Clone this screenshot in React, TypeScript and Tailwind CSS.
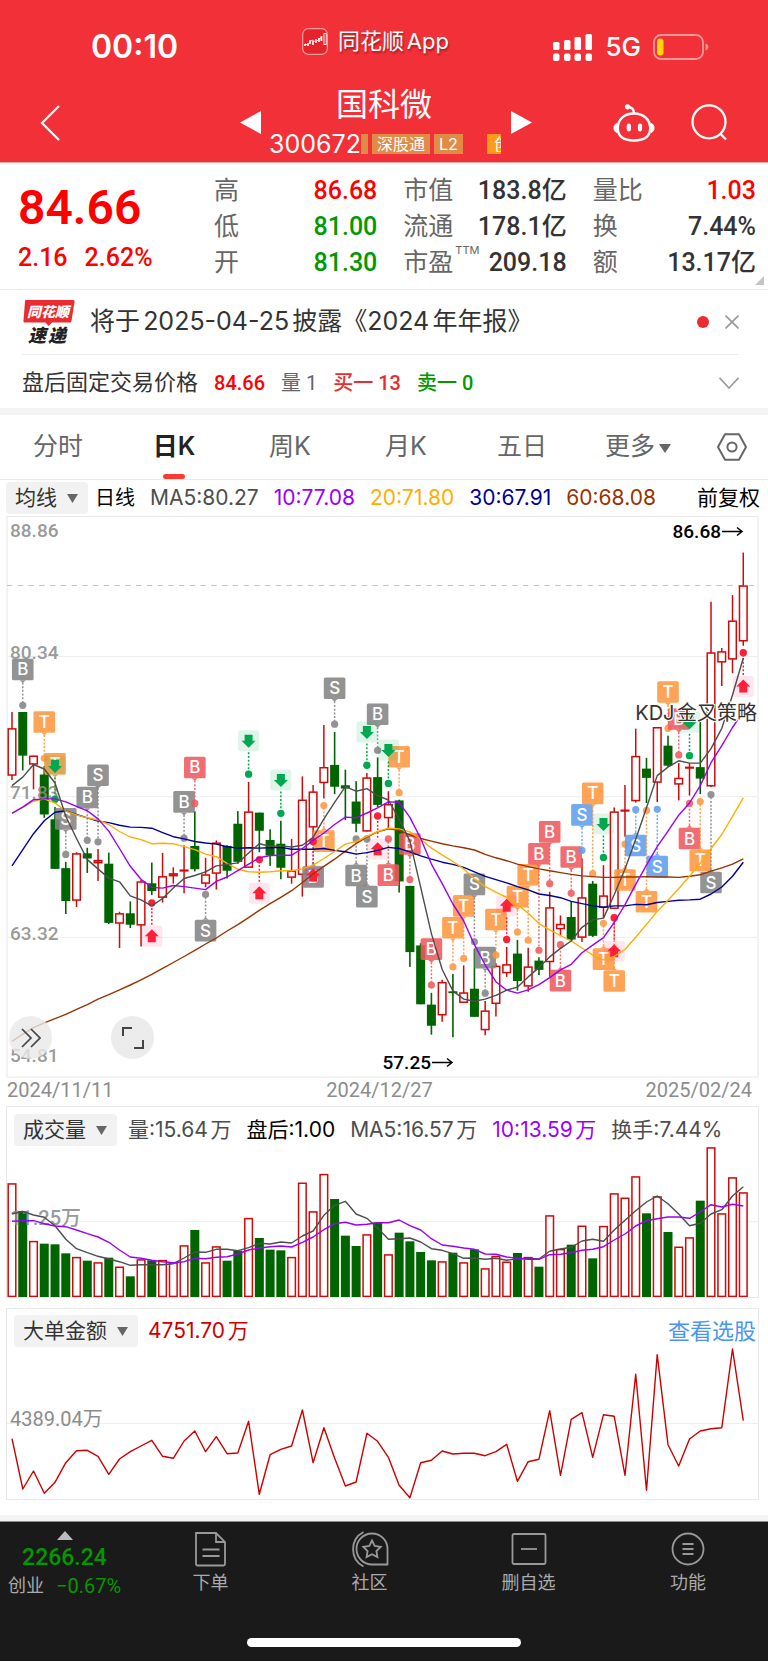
import { useState } from "react";
import type { ReactNode } from "react";

// Horizontal grid shared by the three charts
const X0 = 12;
const STEP = 10.754;
const x = (i: number) => X0 + i * STEP;

const UP = "#cf0a0a";
const DOWN = "#006400";

type Dir = "R" | "G";

// [direction, body top, body bottom, high, low]
const candles: [Dir, number, number, number, number][] = [
  ["R", 590, 718, 546, 730], ["G", 546, 664, 546, 704], ["R", 664, 688, 664, 755], ["G", 715, 823, 692, 832],
  ["G", 836, 970, 803, 970], ["G", 968, 1057, 951, 1092], ["R", 928, 1056, 925, 1073], ["G", 928, 942, 913, 981],
  ["R", 946, 955, 916, 1003], ["G", 956, 1116, 926, 1119], ["R", 1090, 1118, 1086, 1184], ["G", 1090, 1121, 1058, 1130],
  ["R", 1004, 1123, 1000, 1180], ["G", 1009, 1030, 953, 1041], ["R", 990, 1048, 927, 1061], ["R", 982, 990, 966, 1010],
  ["R", 972, 977, 906, 1036], ["G", 908, 971, 814, 977], ["R", 985, 1010, 940, 1020], ["R", 899, 983, 893, 1026],
  ["G", 908, 975, 906, 996], ["G", 848, 951, 814, 956], ["R", 815, 967, 735, 967], ["G", 818, 867, 818, 925],
  ["G", 892, 933, 863, 962], ["G", 902, 967, 840, 998], ["R", 975, 994, 889, 1010], ["R", 783, 986, 720, 1045],
  ["R", 761, 858, 743, 890], ["R", 695, 738, 581, 780], ["G", 689, 748, 600, 768], ["G", 744, 753, 702, 838],
  ["G", 788, 848, 733, 871], ["R", 723, 869, 711, 869], ["G", 722, 797, 669, 803], ["R", 795, 833, 760, 860],
  ["G", 785, 1004, 783, 1034], ["G", 1016, 1195, 1016, 1235], ["G", 1177, 1336, 1171, 1336], ["G", 1337, 1394, 1305, 1418],
  ["R", 1276, 1366, 1270, 1383], ["G", 1301, 1306, 1254, 1425], ["R", 1304, 1332, 1231, 1332], ["G", 1294, 1370, 1186, 1370],
  ["R", 1353, 1406, 1327, 1420], ["R", 1232, 1335, 1225, 1369], ["R", 1228, 1252, 1181, 1262], ["G", 1199, 1273, 1162, 1299],
  ["R", 1234, 1288, 1183, 1302], ["G", 1218, 1243, 1209, 1257], ["R", 1074, 1222, 1032, 1262], ["R", 1119, 1133, 1096, 1152],
  ["G", 1100, 1161, 1058, 1165], ["R", 1047, 1156, 941, 1168], ["G", 1010, 1151, 1003, 1154], ["R", 1042, 1075, 960, 1103],
  ["R", 815, 1078, 804, 1078], ["R", 810, 815, 743, 883], ["R", 665, 787, 591, 791], ["G", 699, 724, 670, 792],
  ["R", 587, 737, 587, 789], ["G", 637, 691, 610, 694], ["R", 724, 742, 684, 785], ["R", 694, 699, 684, 772],
  ["G", 695, 726, 573, 768], ["R", 385, 747, 248, 749], ["R", 382, 412, 373, 476], ["R", 299, 404, 230, 441],
  ["R", 204, 355, 115, 367],
];

const ma5 = [745, 722, 688, 700, 738, 828, 888, 945, 970, 995, 1005, 1043, 1054, 1070, 1050, 1022, 996, 988, 978, 962, 958, 954, 927, 902, 909, 908, 911, 906, 885, 835, 790, 748, 760, 753, 772, 784, 835, 895, 1020, 1145, 1242, 1300, 1322, 1328, 1322, 1312, 1298, 1290, 1262, 1237, 1208, 1185, 1165, 1128, 1108, 1103, 1040, 970, 890, 805, 718, 695, 678, 684, 684, 645, 590, 500, 400];
const ma10 = [820, 803, 783, 781, 781, 789, 801, 813, 835, 868, 915, 963, 998, 1020, 1022, 1015, 1018, 1022, 1026, 1004, 992, 975, 957, 940, 934, 933, 933, 915, 893, 873, 850, 830, 832, 819, 805, 789, 790, 831, 888, 957, 1010, 1065, 1111, 1175, 1230, 1275, 1298, 1306, 1297, 1283, 1264, 1243, 1228, 1197, 1176, 1156, 1115, 1067, 1012, 960, 910, 868, 825, 792, 745, 683, 637, 588, 545];
const ma20 = [819, 803, 787, 781, 792, 814, 824, 832, 838, 850, 869, 884, 891, 902, 901, 902, 910, 918, 930, 937, 955, 971, 978, 979, 978, 975, 975, 970, 960, 942, 923, 903, 896, 882, 869, 860, 862, 870, 890, 914, 932, 950, 970, 997, 1018, 1033, 1047, 1066, 1090, 1118, 1135, 1150, 1165, 1184, 1203, 1216, 1207, 1188, 1155, 1120, 1085, 1055, 1024, 990, 955, 915, 877, 828, 778];
const ma30 = [962, 918, 875, 840, 817, 813, 823, 832, 841, 845, 852, 857, 858, 860, 872, 883, 889, 896, 900, 903, 910, 914, 913, 914, 913, 912, 917, 917, 917, 915, 920, 924, 930, 926, 920, 912, 915, 924, 935, 944, 952, 958, 966, 978, 990, 999, 1008, 1018, 1027, 1038, 1042, 1048, 1058, 1064, 1070, 1074, 1070, 1070, 1066, 1067, 1061, 1058, 1055, 1054, 1052, 1038, 1019, 990, 952];
const ma60 = [1436, 1417, 1399, 1386, 1375, 1363, 1350, 1337, 1322, 1310, 1297, 1284, 1270, 1255, 1239, 1223, 1207, 1190, 1173, 1157, 1138, 1121, 1102, 1082, 1064, 1047, 1029, 1007, 984, 963, 944, 922, 902, 884, 870, 862, 866, 878, 888, 895, 902, 908, 913, 919, 931, 940, 948, 957, 964, 970, 975, 980, 985, 989, 991, 993, 993, 992, 992, 991, 992, 992, 993, 990, 986, 976, 967, 957, 943];

const volumes = [310, 393, 483, 491, 493, 520, 531, 542, 547, 533, 560, 589, 538, 541, 540, 547, 496, 450, 547, 499, 542, 512, 414, 474, 509, 511, 531, 308, 394, 282, 357, 467, 498, 463, 427, 523, 458, 484, 516, 541, 544, 518, 547, 508, 565, 528, 545, 519, 531, 560, 406, 507, 494, 437, 535, 438, 340, 353, 289, 400, 349, 456, 500, 472, 362, 202, 400, 292, 337];
const vol5 = [402, 394, 405, 412, 437, 478, 506, 518, 529, 537, 545, 556, 554, 554, 554, 551, 534, 516, 517, 508, 508, 512, 503, 490, 492, 486, 489, 468, 453, 406, 376, 364, 402, 415, 444, 478, 476, 474, 486, 506, 511, 521, 535, 534, 538, 535, 541, 536, 535, 537, 514, 507, 502, 483, 478, 484, 450, 421, 392, 366, 348, 371, 402, 437, 430, 402, 389, 348, 320];
const vol10 = [424, 422, 422, 431, 438, 440, 450, 461, 471, 487, 510, 531, 535, 541, 545, 548, 545, 535, 536, 532, 530, 522, 510, 504, 500, 498, 501, 487, 471, 449, 431, 427, 435, 433, 428, 428, 420, 437, 450, 476, 495, 499, 504, 508, 522, 523, 531, 535, 538, 538, 524, 523, 518, 511, 508, 500, 480, 462, 438, 422, 416, 411, 411, 415, 396, 374, 381, 373, 378];

const bigOrders = [416, 567, 513, 580, 547, 488, 452, 451, 469, 523, 477, 455, 438, 421, 469, 475, 423, 393, 455, 410, 461, 459, 364, 583, 464, 448, 438, 330, 488, 383, 474, 558, 546, 400, 424, 472, 556, 593, 488, 481, 453, 462, 460, 460, 467, 455, 433, 544, 485, 478, 332, 526, 358, 338, 472, 344, 349, 526, 223, 571, 164, 434, 498, 417, 393, 386, 383, 147, 362];

type Tone = "gray" | "orange" | "red" | "blue";
const tones: Record<Tone, string> = { gray: "#858585", orange: "#ff983f", red: "#ee5a5e", blue: "#5f9ff0" };

// [candle index, letter, tone, badge centre, dot centre]
const signals: [number, string, Tone, number, number][] = [
  [1, "B", "gray", 431, 528], [3, "T", "orange", 573, 671], [4, "T", "orange", 686, 782], [5, "S", "gray", 835, 931],
  [7, "B", "gray", 777, 893], [8, "S", "gray", 717, 897], [16, "B", "gray", 789, 887], [17, "B", "red", 696, 793],
  [18, "S", "gray", 1137, 1039], [28, "B", "gray", 992, 896], [29, "T", "orange", 895, 799], [30, "S", "gray", 482, 579],
  [32, "B", "gray", 988, 889], [33, "S", "gray", 1045, 889], [34, "B", "gray", 552, 650], [35, "B", "red", 987, 889],
  [36, "T", "orange", 667, 764], [37, "B", "red", 903, 999], [39, "B", "red", 1187, 1284], [41, "T", "orange", 1129, 1235],
  [42, "T", "orange", 1070, 1212], [43, "S", "gray", 1012, 1167], [44, "B", "gray", 1210, 1306], [45, "T", "orange", 1107, 1203],
  [47, "T", "orange", 1045, 1141], [48, "T", "orange", 986, 1163], [49, "B", "red", 929, 1190], [50, "B", "red", 870, 1010],
  [51, "B", "red", 1272, 1175], [52, "B", "red", 938, 1036], [53, "S", "blue", 824, 920], [54, "T", "orange", 766, 983],
  [55, "T", "orange", 1214, 1117], [56, "T", "orange", 1273, 1102], [57, "T", "orange", 1000, 903], [58, "S", "blue", 907, 810],
  [59, "T", "orange", 1059, 812], [60, "S", "blue", 964, 809], [61, "T", "orange", 492, 590], [62, "B", "red", 565, 662],
  [63, "B", "red", 888, 793], [64, "T", "orange", 947, 788], [65, "S", "gray", 1007, 769],
];

// [candle index, up?, badge centre, dot centre]
const arrows: [number, boolean, number, number][] = [
  [4, false, 692, 782], [13, true, 1152, 1062], [22, false, 624, 714], [23, true, 1036, 945], [25, false, 730, 820],
  [28, true, 988, 896], [33, false, 600, 690], [34, true, 917, 827], [35, false, 649, 739], [46, true, 1070, 1161],
  [55, false, 849, 939], [56, true, 1193, 1102], [63, false, 574, 664], [68, true, 477, 386],
];

const points = (data: number[], scale: number) =>
  data.map((v, i) => `${x(i).toFixed(1)},${(v / scale).toFixed(1)}`).join(" ");

function Line({ data, scale, color }: { data: number[]; scale: number; color: string }) {
  return <polyline points={points(data, scale)} fill="none" stroke={color} strokeWidth="1.4" strokeLinejoin="round" />;
}

const K = 2.703;

function KChart() {
  return (
    <svg viewBox="0 6 768 562" className="block h-auto w-full" role="img" aria-label="日K">
      <rect x="7" y="6.5" width="751" height="560.5" fill="none" stroke="#e8e8e8" />
      {[396, 775, 1155].map((v) => (
        <line key={v} x1="7" x2="758" y1={v / K} y2={v / K} stroke="#eeeeee" />
      ))}
      <line x1="7" x2="756" y1="75.5" y2="75.5" stroke="#e3bd8a" strokeDasharray="5.4 5.35" />

      {candles.map(([dir, top, bottom, high, low], i) => {
        const c = x(i);
        const t = top / K;
        const b = bottom / K;
        const flat = b - t < 4;
        return dir === "G" ? (
          <g key={i} fill={DOWN}>
            <rect x={c - 0.8} y={high / K} width="1.6" height={(low - high) / K} />
            <rect x={c - 4.5} y={t} width="9" height={b - t} />
          </g>
        ) : (
          <g key={i} stroke={UP} strokeWidth="1.5" fill={flat ? UP : "#ffffff"}>
            <line x1={c} x2={c} y1={high / K} y2={low / K} />
            <rect x={c - 3.8} y={t + 0.6} width="7.6" height={Math.max(b - t - 1.2, 0.6)} fillOpacity={flat ? 0.6 : 1} />
          </g>
        );
      })}

      <g className="font-['Roboto',sans-serif] font-medium text-[19px]" fill="#8c8c8c" fillOpacity="0.9">
        <text x="10" y="27">88.86</text>
        <text x="10" y="149">80.34</text>
        <text x="10" y="289">71.83</text>
        <text x="10" y="430">63.32</text>
        <text x="10" y="552">54.81</text>
      </g>

      <g className="font-['Inter',sans-serif] text-[17px] font-medium" textAnchor="middle">
        {signals.map(([i, letter, tone, badge, dot]) => {
          const by = badge / K;
          const dy = dot / K;
          const s = dy > by ? 1 : -1;
          const c = x(i);
          return (
            <g key={`${i}${letter}`} opacity="0.88">
              <line x1={c} x2={c} y1={by + s * 13} y2={dy} stroke={tones[tone]} strokeWidth="1.5" strokeDasharray="2 1.7" />
              <circle cx={c} cy={dy} r="3.6" fill={tones[tone]} />
              <rect x={c - 10.8} y={by - 10.8} width="21.6" height="21.6" rx="1.5" fill={tones[tone]} />
              <path d={`M${c - 3} ${by + s * 10.8}L${c} ${by + s * 13.5}L${c + 3} ${by + s * 10.8}z`} fill={tones[tone]} />
              <text x={c} y={by + 6} fill="#ffffff">{letter}</text>
            </g>
          );
        })}
      </g>

      {arrows.map(([i, up, badge, dot]) => {
        const by = badge / K;
        const dy = dot / K;
        const s = dy > by ? 1 : -1;
        const a = up ? -1 : 1;
        const c = x(i);
        const color = up ? "#ff2038" : "#00a84f";
        return (
          <g key={`${i}${up}`}>
            <rect x={c - 10.5} y={by - 10.5} width="21" height="21" rx="2.5" fill={up ? "#ff2a70" : "#00a84f"} fillOpacity="0.12" />
            <line x1={c} x2={c} y1={by + s * 11.5} y2={dy} stroke={color} strokeWidth="1.5" strokeDasharray="2 1.7" />
            <circle cx={c} cy={dy} r="3.7" fill={color} />
            <path
              d={`M${c} ${by + a * 7}L${c + 7} ${by}H${c + 4}V${by - a * 6}H${c - 4}V${by}H${c - 7}z`}
              fill={color}
            />
          </g>
        );
      })}

      <Line data={ma60} scale={K} color="#993300" />
      <Line data={ma30} scale={K} color="#000099" />
      <Line data={ma20} scale={K} color="#ffae00" />
      <Line data={ma10} scale={K} color="#9900ff" />
      <Line data={ma5} scale={K} color="#4d4d4d" />

      <g className="font-['Roboto',sans-serif] text-[19px] font-medium" textAnchor="end">
        <text x="721" y="28">86.68</text>
        <text x="431" y="559">57.25</text>
      </g>
      <g stroke="#000000" strokeWidth="1.5" fill="none">
        <path d="M722 21.5h20m-5-4 5 4-5 4" />
        <path d="M432 552.5h20m-5-4 5 4-5 4" />
      </g>
      <text
        x="757"
        y="210"
        textAnchor="end"
        className="font-['Inter','Noto_Sans_CJK_SC',sans-serif] text-[20px]"
        fill="#333333"
        stroke="#ffffff"
        strokeWidth="2"
        paintOrder="stroke"
      >
        KDJ金叉策略
      </text>
    </svg>
  );
}

function VolumeChart() {
  return (
    <svg viewBox="7 66 751 151" className="block h-auto w-full" role="img" aria-label="成交量">
      <line x1="7" x2="758" y1="141.7" y2="141.7" stroke="#eeeeee" />
      {volumes.map((v, i) =>
        candles[i][0] === "G" ? (
          <rect key={i} x={x(i) - 4.5} y={v / 3} width="9" height={217 - v / 3} fill={DOWN} />
        ) : (
          <rect key={i} x={x(i) - 3.8} y={v / 3 + 0.6} width="7.6" height={215.8 - v / 3} fill="#ffffff" stroke={UP} strokeWidth="1.5" />
        ),
      )}
      <text x="10" y="145" className="font-['Roboto','Noto_Sans_CJK_SC',sans-serif] text-[20px] font-medium [text-autospace:no-autospace]" fill="#8c8c8c" fillOpacity="0.9">
        11.25万
      </text>
      <Line data={vol5} scale={3} color="#4d4d4d" />
      <Line data={vol10} scale={3} color="#9900ff" />
    </svg>
  );
}

function MoneyChart() {
  return (
    <svg viewBox="7 47 751 152" className="block h-auto w-full" role="img" aria-label="大单金额">
      <line x1="7" x2="758" y1="123.5" y2="123.5" stroke="#eeeeee" />
      <text x="10" y="126" className="font-['Roboto','Noto_Sans_CJK_SC',sans-serif] text-[20px] [text-autospace:no-autospace]" fill="#8c8c8c">
        4389.04万
      </text>
      <Line data={bigOrders} scale={3} color="#cc0000" />
    </svg>
  );
}

function Picker({ label, options }: { label: string; options: string[] }) {
  return (
    <div className="relative h-8 shrink-0">
      <select
        aria-label={label}
        className="h-8 appearance-none rounded bg-[#f2f2f2] pl-[9px] pr-[31px] text-[21px] leading-8 text-[#333] outline-none"
      >
        {options.map((o) => (
          <option key={o}>{o}</option>
        ))}
      </select>
      <svg viewBox="0 0 11 9" className="pointer-events-none absolute top-3 right-2.5 h-[9px] w-[11px]" fill="#666">
        <path d="M0 0h11L5.500 9z" />
      </svg>
    </div>
  );
}

function Quote({ label, value, color = "text-[#333]", sup }: { label: string; value: string; color?: string; sup?: string }) {
  return (
    <div className="flex h-9 items-center">
      <span className="text-[25px] text-[#666]">{label}</span>
      {sup && <sup className="ml-0.5 self-start pt-1 text-[11px] leading-3 text-[#666]">{sup}</sup>}
      <span className={`ml-auto font-['Roboto','Noto_Sans_CJK_SC',sans-serif] text-[25px] font-medium ${color}`}>{value}</span>
    </div>
  );
}

function NavItem({ label, children }: { label: string; children: ReactNode }) {
  return (
    <button className="flex flex-col items-center gap-[3px] pt-2 text-[#aaa]">
      <svg viewBox="0 0 38 38" className="h-[38px] w-[38px]" fill="none" stroke="#999" strokeWidth="1.8">
        {children}
      </svg>
      <span className="text-[18px] leading-6">{label}</span>
    </button>
  );
}

const TABS = ["分时", "日K", "周K", "月K", "五日", "更多"];

export default function App() {
  const [tab, setTab] = useState("日K");
  const [showNews, setShowNews] = useState(true);

  return (
    <div className="min-h-screen bg-white font-['Inter','Noto_Sans_CJK_SC',sans-serif] text-[#333] [text-autospace:normal]">
      <header className="bg-[#f23037] text-white">
        {/* Status bar */}
        <div className="flex h-[74px] items-center pt-5">
          <div className="w-[302px] pl-[91px] text-[32px] leading-10 font-semibold">00:10</div>
          <div className="flex flex-1 items-center gap-2.5 pb-3">
            <svg viewBox="0 0 26 27" className="h-[27px] w-[26px]">
              <rect x="0.700" y="0.700" width="24.600" height="25.600" rx="5.500" fill="#e6222b" stroke="#f8a0a3" strokeWidth="1.200" />
              <path d="M2 17h2m2-2v3M8 12v4m3-3v4m3-6v4m3-5v4" stroke="#fff" strokeWidth="1.600" />
              <path d="M3 16l3 1 4-5 4 2 3-3 2-1" stroke="#fff" strokeWidth="0.800" fill="none" />
              <rect x="18.500" y="8" width="1.800" height="5" fill="#fff" />
              <rect x="22" y="5.500" width="2.200" height="11" fill="none" stroke="#fff" strokeWidth="0.900" />
            </svg>
            <span className="text-[22px] [text-shadow:1px_2px_2px_rgba(0,0,0,0.35)]">同花顺App</span>
          </div>
          <div className="flex items-center gap-3 pr-[58px]">
            <svg viewBox="0 0 40 27" className="h-[27px] w-10" fill="#fff">
              <rect x="0" y="8" width="6.500" height="8" rx="1.500" />
              <rect x="11" y="6" width="6.500" height="10" rx="1.500" />
              <rect x="21.500" y="3" width="6.500" height="13" rx="1.500" />
              <rect x="32.500" y="0" width="6.500" height="16" rx="1.500" />
              <rect x="0" y="19.500" width="6.500" height="7.500" rx="2" />
              <rect x="11" y="19.500" width="6.500" height="7.500" rx="2" />
              <rect x="21.500" y="19.500" width="6.500" height="7.500" rx="2" />
              <rect x="32.500" y="19.500" width="6.500" height="7.500" rx="2" />
            </svg>
            <span className="text-[26px] leading-8 font-medium">5G</span>
            <svg viewBox="0 0 57 26" className="h-[26px] w-[57px]">
              <rect x="1" y="1" width="49" height="24" rx="7" fill="none" stroke="#f9979b" strokeWidth="1.800" />
              <rect x="4" y="4.500" width="6.500" height="17" rx="3" fill="#ffd60a" />
              <path d="M52.500 9.500c4 1 4 6 0 7z" fill="#f9979b" />
            </svg>
          </div>
        </div>

        {/* Title bar */}
        <div className="flex h-[89px] items-center border-b border-[#f9a6a9] px-10 pt-[9px]">
          <button aria-label="返回" className="w-[200px]">
            <svg viewBox="0 0 20 36" className="h-9 w-5" fill="none" stroke="#fff" strokeWidth="2.200">
              <path d="M19 1L2 18l17 17" />
            </svg>
          </button>
          <button aria-label="上一只">
            <svg viewBox="0 0 21 23" className="h-[23px] w-[21px]" fill="#fff">
              <path d="M21 0v23L0 11.500z" />
            </svg>
          </button>
          <div className="w-[250px]">
            <h1 className="pr-1 text-center text-[32px] leading-10">国科微</h1>
            <div className="flex h-9 items-center pt-0.5 pl-2 text-[16px] leading-5">
              <span className="text-[25px] leading-9">300672</span>
              <span className="h-5 w-[7px] bg-[#e08c47]" />
              <span className="ml-1 h-5 bg-[#e08c47] px-[5px]">深股通</span>
              <span className="ml-1 h-5 bg-[#e08c47] px-[5px]">L2</span>
              <span className="mr-2.5 ml-auto h-5 w-3.5 shrink-0 overflow-hidden bg-[#ff9c17] pl-[7px] whitespace-nowrap">创</span>
            </div>
          </div>
          <button aria-label="下一只">
            <svg viewBox="0 0 21 23" className="h-[23px] w-[21px]" fill="#fff">
              <path d="M0 0v23l21-11.500z" />
            </svg>
          </button>
          <div className="ml-auto flex items-center gap-9">
            <button aria-label="助手">
              <svg viewBox="0 0 42 38" className="h-[38px] w-[42px]" fill="none" stroke="#fff" strokeWidth="2.400">
                <path d="M21 9.500C11 9.500 4.800 15.500 4.800 24S10 36.500 21 36.500 37.200 32 37.200 24 31 9.500 21 9.500z" />
                <path d="M21 9.500c0-4.500-2.500-6.500-6.500-6.500" />
                <circle cx="14.500" cy="2.800" r="2.600" fill="#fff" stroke="none" />
                <path d="M4 19.500C1.500 20 1 22 1 24s.6 3.500 2.800 4.500zM38 19.500c2.500.5 3 2.500 3 4.500s-.6 3.500-2.800 4.500z" fill="#fff" strokeWidth="1" />
                <path d="M15.800 21.500v4M27 21.500v4" strokeWidth="4.200" strokeLinecap="round" />
              </svg>
            </button>
            <button aria-label="搜索">
              <svg viewBox="0 0 37 37" className="h-[37px] w-[37px]" fill="none" stroke="#fff" strokeWidth="2.300">
                <circle cx="18" cy="17.800" r="16.500" />
                <path d="M29 29.500l6 6" />
              </svg>
            </button>
          </div>
        </div>
      </header>

      {/* Quote summary */}
      <section className="relative flex border-b border-[#ebebeb] pr-3 pb-2 pl-[18px] [text-autospace:no-autospace]">
        <div className="w-[196px] shrink-0 pt-[13px] font-['Roboto',sans-serif] font-medium text-[#fe0000]">
          <div className="text-[48px] leading-[64px] font-semibold">84.66</div>
          <div className="flex gap-[17px] text-[25px] leading-9">
            <span>2.16</span>
            <span>2.62%</span>
          </div>
        </div>
        <div className="grid flex-1 grid-cols-3 gap-x-[26px] pt-2.5">
          <Quote label="高" value="86.68" color="text-[#fe0000]" />
          <Quote label="市值" value="183.8亿" />
          <Quote label="量比" value="1.03" color="text-[#fe0000]" />
          <Quote label="低" value="81.00" color="text-[#009900]" />
          <Quote label="流通" value="178.1亿" />
          <Quote label="换" value="7.44%" />
          <Quote label="开" value="81.30" color="text-[#009900]" />
          <Quote label="市盈" value="209.18" sup="TTM" />
          <Quote label="额" value="13.17亿" />
        </div>
        <svg viewBox="0 0 9 9" className="absolute right-1 bottom-1 h-[9px] w-[9px]" fill="#c4c4c4">
          <path d="M9 0v9H0z" />
        </svg>
      </section>

      {/* News */}
      {showNews && (
        <section className="mr-[29px] ml-[22px] flex h-[65px] items-center border-b border-[#ebebeb]">
          <svg viewBox="0 0 53 44" className="h-11 w-[53px]" role="img" aria-label="同花顺速递">
            <path d="M4 0h47a1.500 1.500 0 0 1 1.500 2L49.500 21a2 2 0 0 1-2 1.500H30l-3.500 3.500-3-3.500H3a1.500 1.500 0 0 1-1.500-2L3 1.500A1.500 1.500 0 0 1 4 0z" fill="#ea2c30" />
            <g className="font-['Noto_Sans_CJK_SC',sans-serif] font-black italic">
              <text x="5" y="16.500" fontSize="14" fill="#fff">同花顺</text>
              <text x="6" y="42" fontSize="18" fill="#222">速</text>
              <text x="26" y="42" fontSize="18" fill="#222">递</text>
            </g>
          </svg>
          <p className="ml-[15px] text-[25px]">将于2025-04-25披露《2024年年报》</p>
          <span className="ml-auto h-3 w-3 rounded-full bg-[#ea2c30]" />
          <button aria-label="关闭" className="ml-4" onClick={() => setShowNews(false)}>
            <svg viewBox="0 0 14 14" className="h-3.5 w-3.5" stroke="#999" strokeWidth="1.600">
              <path d="M.5.5l13 13M13.500.5l-13 13" />
            </svg>
          </button>
        </section>
      )}

      {/* After-hours trading */}
      <section className="flex h-[53px] items-center gap-4 pt-0.5 pr-[29px] pl-[22px] font-['Roboto','Noto_Sans_CJK_SC',sans-serif] text-[20px] [text-autospace:no-autospace]">
        <span className="text-[22px]">盘后固定交易价格</span>
        <span className="font-medium text-[#fe0000]">84.66</span>
        <span className="text-[#666]">量 1</span>
        <span className="font-medium text-[#ea2c30]">买一 13</span>
        <span className="font-medium text-[#009900]">卖一 0</span>
        <button aria-label="展开" className="ml-auto">
          <svg viewBox="0 0 20 12" className="h-3 w-5" fill="none" stroke="#999" strokeWidth="1.600">
            <path d="M.5.8L10 11l9.500-10.200" />
          </svg>
        </button>
      </section>
      <div className="h-[7px] bg-[#f4f4f4]" />

      {/* Period tabs */}
      <nav className="grid h-[65px] grid-cols-[repeat(6,116fr)_72fr] border-b border-[#ebebeb] text-[25px] [text-autospace:no-autospace]">
        {TABS.map((t) => (
          <button
            key={t}
            onClick={() => setTab(t)}
            className={t === tab ? "relative font-semibold text-[#222]" : "relative text-[#666]"}
          >
            {t}
            {t === "更多" && (
              <svg viewBox="0 0 12 9" className="ml-1 inline-block h-[9px] w-3 align-middle" fill="#666">
                <path d="M0 0h12L6 9z" />
              </svg>
            )}
            {t === tab && <span className="absolute bottom-0 left-1/2 h-[5px] w-[22px] -translate-x-1/2 rounded bg-[#fb3a33]" />}
          </button>
        ))}
        <button aria-label="设置" className="flex items-center justify-center">
          <svg viewBox="0 0 30 28" className="h-7 w-[30px]" fill="none" stroke="#666" strokeWidth="2">
            <path d="M8 1.200h14L29 14l-7 12.800H8L1 14z" strokeLinejoin="round" />
            <circle cx="15" cy="14" r="4.600" />
          </svg>
        </button>
      </nav>

      {/* Moving averages */}
      <div className="flex h-9 items-center gap-[15px] pr-2 pl-1.5 text-[21px] whitespace-nowrap">
        <div className="-mr-2">
          <Picker label="主图指标" options={["均线"]} />
        </div>
        <span className="text-[20px] text-black">日线</span>
        <span className="text-[#4d4d4d]">MA5:80.27</span>
        <span className="text-[#9900ff]">10:77.08</span>
        <span className="text-[#ffae00]">20:71.80</span>
        <span className="text-[#000099]">30:67.91</span>
        <span className="text-[#993300]">60:68.08</span>
        <button className="ml-auto text-black">前复权</button>
      </div>

      <div className="relative">
        <KChart />
        <button aria-label="更多指标" className="absolute bottom-[19px] left-[9px] flex h-[43px] w-[43px] items-center justify-center rounded-full bg-[#e9e9e9]/80">
          <svg viewBox="0 0 20 20" className="h-5 w-5" fill="none" stroke="#444" strokeWidth="1.700">
            <path d="M1 1l9 9-9 9M10 1l9 9-9 9" />
          </svg>
        </button>
        <button aria-label="全屏" className="absolute bottom-[19px] left-[111px] flex h-[43px] w-[43px] items-center justify-center rounded-full bg-[#ececec]">
          <svg viewBox="0 0 22 22" className="h-[22px] w-[22px]" fill="none" stroke="#444" strokeWidth="2">
            <path d="M1 9V1h9M21 13v8h-9" />
          </svg>
        </button>
      </div>

      <div className="flex h-7 justify-between pr-4 pl-[7px] font-['Roboto',sans-serif] text-[20px] leading-6 text-[#8c8c8c]">
        <span>2024/11/11</span>
        <span>2024/12/27</span>
        <span>2025/02/24</span>
      </div>

      {/* Volume */}
      <section className="mr-[9px] ml-1.5 border border-[#e8e8e8]">
        <div className="flex h-[39px] items-center gap-[15px] pt-1.5 pl-[7px] text-[21px] whitespace-nowrap text-[#4d4d4d]">
          <Picker label="成交量指标" options={["成交量"]} />
          <span className="-ml-1">量:15.64万</span>
          <span className="text-black">盘后:1.00</span>
          <span>MA5:16.57万</span>
          <span className="text-[#9900ff]">10:13.59万</span>
          <span>换手:7.44%</span>
        </div>
        <VolumeChart />
      </section>

      {/* Big orders */}
      <section className="mt-2.5 mr-[9px] ml-1.5 border border-[#e8e8e8]">
        <div className="flex h-[38px] items-center gap-2.5 pt-1.5 pr-0.5 pl-[7px] text-[21px]">
          <Picker label="资金指标" options={["大单金额"]} />
          <span className="text-[#cc0000]">4751.70万</span>
          <a href="#picks" className="ml-auto text-[22px] text-[#4a94f5]">查看选股</a>
        </div>
        <MoneyChart />
      </section>

      <div className="mt-[15px] h-1.5 bg-[#f4f4f4]" />

      {/* Bottom bar */}
      <footer className="border-t border-[#8c8c8c] bg-[#1a1a1a] pb-3.5">
        <nav className="grid h-[116px] grid-cols-[131fr_159fr_159fr_159fr_160fr] items-start">
          <button className="flex flex-col items-center pt-[9px] pr-0.5 font-['Roboto','Noto_Sans_CJK_SC',sans-serif]">
            <svg viewBox="0 0 16 9" className="h-[9px] w-4" fill="#bbb">
              <path d="M8 0l8 9H0z" />
            </svg>
            <span className="text-[23px] leading-9 font-medium text-[#009900]">2266.24</span>
            <span className="flex items-center gap-3 text-[20px] leading-5 text-[#009900]">
              <span className="text-[18px] text-[#aaa]">创业</span>
              −0.67%
            </span>
          </button>
          <NavItem label="下单">
            <path d="M4 3h20l9 9v22a1.500 1.500 0 0 1-1.500 1.500h-26A1.500 1.500 0 0 1 4 34z M24 3v9h9 M10.500 19.500h17M10.500 26h17" />
          </NavItem>
          <NavItem label="社区">
            <path d="M36.500 34.500H21.500a15.500 15.500 0 1 1 15-15.500z M12.500 2a19.500 19.500 0 0 0 0 34.500" strokeLinejoin="round" />
            <path d="M21 10.500l2.700 5.400 6 .9-4.300 4.200 1 6-5.400-2.800-5.400 2.800 1-6-4.300-4.200 6-.9z" />
          </NavItem>
          <NavItem label="删自选">
            <rect x="2.500" y="4" width="33" height="30" rx="1.500" />
            <path d="M11 19h16" />
          </NavItem>
          <NavItem label="功能">
            <circle cx="19" cy="19" r="15.500" />
            <path d="M13.500 14h11M13.500 19h11M13.500 24h11" />
          </NavItem>
        </nav>
        <div className="mx-auto h-[9px] w-[274px] rounded-full bg-white" />
      </footer>
    </div>
  );
}
